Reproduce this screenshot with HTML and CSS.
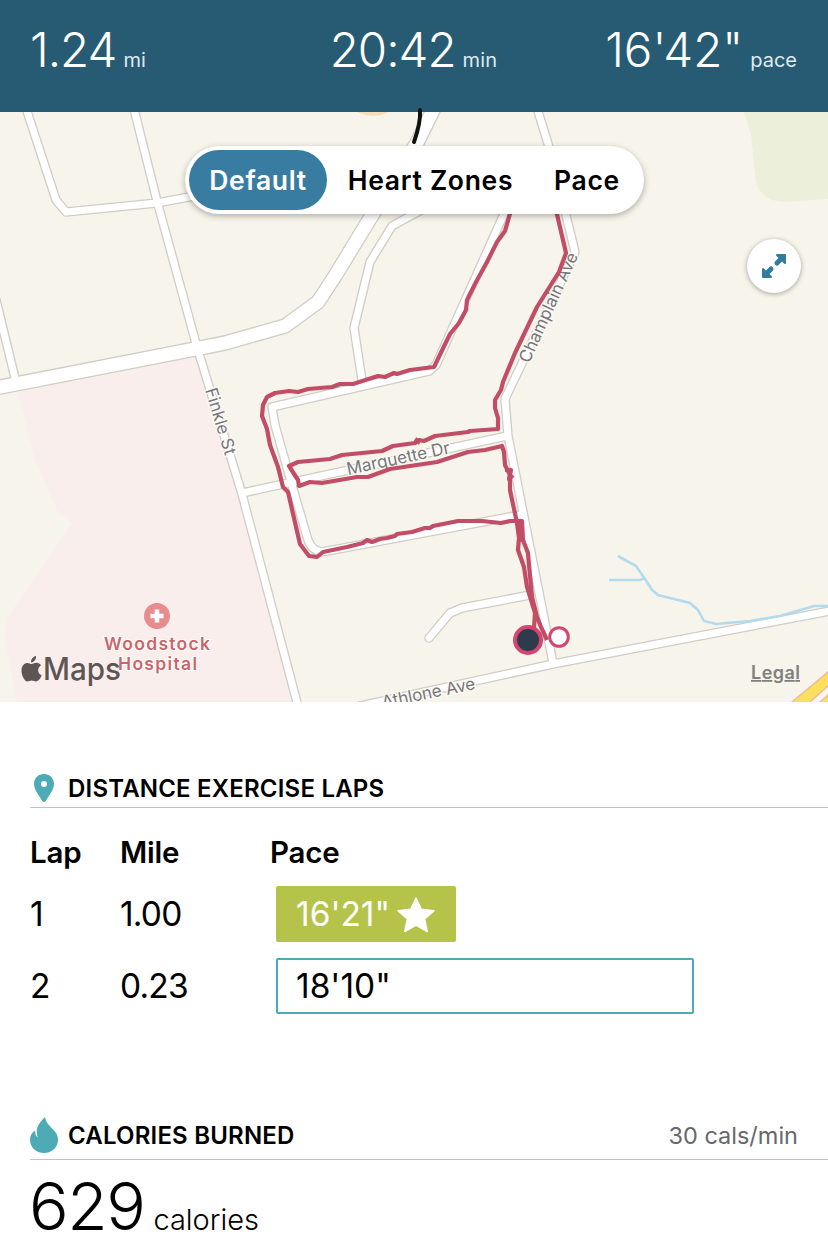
FILE: index.html
```html
<!DOCTYPE html>
<html lang="en">
<head>
    <meta charset="UTF-8">
    <meta name="viewport" content="width=device-width, initial-scale=1.0">
    <title>Workout Summary</title>
    <link rel="stylesheet" href="styles.css">
</head>
<body>
    <header class="summary">
        <div class="stat"><span class="value">1.24</span> <span class="unit">mi</span></div>
        <div class="stat"><span class="value">20:42</span> <span class="unit">min</span></div>
        <div class="stat stat-pace"><span class="value value-pace">16'42"</span> <span class="unit">pace</span></div>
    </header>

    <div class="map">
        <svg class="map-canvas" width="828" height="590" viewBox="0 112 828 590">
            <defs>
                <g id="small-roads">
                    <path d="M25 105L56 200L66 212L157 203L215 192"/>
                    <path d="M133 105L157 201L197 347L242 494L299 710"/>
                    <path d="M-4 300L16 382"/>
                    <path d="M425 208L392 226L370 262L354 328L362 380"/>
                    <path d="M536 105L550 150L575 252L505 399L508 436L553 663"/>
                    <path d="M508 205L436 365L429 371L272 407L275 425L291 482L308 540Q312 551 322 552L520 515"/>
                    <path d="M242 493L507 436"/>
                    <path d="M429 638L450 613L462 608L530 595"/>
                    <path d="M360 706L553 664L835 610"/>
                </g>
                <path id="main-road" d="M-5 388L200 348L225 343L285 326L318 302L335 276L374 212L417 143L438 100"/>
            </defs>

            <!-- land areas -->
            <rect y="112" width="828" height="590" fill="#f7f4eb"/>
            <path d="M18 392L198 350L242 494L299 702L17 702L12 675L5 640L7 618L25 592L72 523L58 512L35 460L27 430Z" fill="#f9eeeb"/>
            <path d="M744 112L751 135L756 182Q760 201 785 202L828 199V112Z" fill="#ecefda"/>
            <ellipse cx="373" cy="107" rx="18" ry="9" fill="#f8ddb6"/>

            <!-- roads -->
            <use href="#small-roads" class="road-edge"/>
            <use href="#main-road" class="road-edge main"/>
            <use href="#small-roads" class="road-fill"/>
            <use href="#main-road" class="road-fill main"/>
            <path d="M791 702L828 671V702Z" fill="#f0b99a"/>
            <path d="M793 702L828 673V685L809 702Z" fill="#fbe05d"/>
            <path d="M811 702L828 687V694L819 702Z" fill="#fbf6ee"/>
            <path d="M821 702L828 696V702Z" fill="#fbe05d"/>
            <path class="creek" d="M618 556L636 566L645 579L652 590L658 595L690 603L698 610L704 621L716 624L750 621L780 616L814 606L828 606M609 580H640L645 578"/>

            <!-- street names -->
            <text class="street" transform="translate(205 390) rotate(73)" textLength="69">Finkle St</text>
            <text class="street" transform="translate(529 364) rotate(-65.5)" textLength="119">Champlain Ave</text>
            <text class="street" transform="translate(348 475) rotate(-12)" textLength="105">Marquette Dr</text>
            <text class="street" transform="translate(383 708) rotate(-11.5)" textLength="95">Athlone Ave</text>

            <!-- recorded route -->
            <path class="route" d="M511 210L505 231L497 242L487 262L476 282L467 300L466 310L459 323L450 334L434 367L410 370L397 374L394 373L385 377L378 376L353 384L340 384L332 387L308 389L298 392L289 391L275 393L267 397L263 405L262 416L267 429L270 445L278 467L283 487L288 492L300 544L309 556L317 557L323 552L347 547L363 543L367 540L372 542L380 539L387 538L395 536L397 534L412 532L425 528L430 528L433 526L458 521L482 521L501 523L510 521L522 521L523 540L528 553L529 565L532 597L537 617L541 627L547 640"/>
            <path class="route" d="M556 210L566 253L559 272L537 307L515 353L503 382L501 390L495 400V408L498 418V429L470 431L468 432L435 436L424 441L419 440L415 443L393 446L382 451L342 455L330 459L298 462L289 466L298 480L299 486L310 482L322 483L357 477L368 477L390 469L437 462L468 452L485 450L502 446L504 452L505 465L510 475V490L517 523L519 538L518 550L524 567L527 587L535 613L534 628"/>
            <path class="route" d="M505 470L511 470L509 479L513 475M519 521L521 542M415 439L420 443"/>
            <circle cx="559" cy="637" r="9.3" fill="#fff" stroke="#d4466f" stroke-width="3"/>
            <circle cx="528" cy="640" r="13" fill="#2d3b4c" stroke="#d4466f" stroke-width="4"/>

            <!-- hospital -->
            <circle cx="157" cy="616" r="13" fill="#e78d90"/>
            <path d="M157 609.500V622.500M150.500 616H163.500" stroke="#fff" stroke-width="4.500"/>
            <text class="place" x="104" y="650" textLength="106">Woodstock</text>
            <text class="place" x="118" y="670" textLength="79">Hospital</text>

            <!-- attribution -->
            <g fill="#5e5654">
                <path d="M36 656C36.500 659.500 33.500 662.500 31 662.500C30.600 659.500 33.200 656.500 36 656Z"/>
                <path d="M31.500 664C33 664 34.500 662.800 36.500 662.800C38.500 662.800 40 663.700 41 665.200C36.800 668 37.500 673.500 41.700 675.300C40.500 678.600 38.300 681.400 36 681.400C34.400 681.400 33.600 680.500 31.700 680.500C29.700 680.500 28.800 681.400 27.300 681.400C24.500 681.400 21.500 675.500 21.500 670.500C21.500 665.500 24.500 662.900 27.500 662.900C29.200 662.900 30.400 664 31.500 664Z"/>
                <text class="brand" x="43" y="680" textLength="78" lengthAdjust="spacingAndGlyphs">Maps</text>
            </g>
            <text class="legal" x="751" y="679" textLength="49">Legal</text>
        </svg>

        <div class="tabs">
            <button class="tab active">Default</button>
            <button class="tab tab-zones">Heart Zones</button>
            <button class="tab tab-pace">Pace</button>
        </div>

        <button class="expand" aria-label="Expand map">
            <svg width="26" height="26" viewBox="0 0 26 26">
                <path d="M16 10L20 6M10 16L6 20" stroke="#337ba1" stroke-width="5" stroke-linecap="round"/>
                <path d="M15.500 1H24Q25 1 25 2V10.500L23.500 11L15 2.500ZM10.500 25H2Q1 25 1 24V15.500L2.500 15L11 23.500Z" fill="#337ba1"/>
            </svg>
        </button>

        <svg class="pen-mark" width="16" height="40" viewBox="0 0 16 40">
            <path d="M10 3Q11 15 4 35" fill="none" stroke="#111" stroke-width="4" stroke-linecap="round"/>
        </svg>
    </div>

    <section class="laps">
        <h2 class="section-title">
            <svg class="icon" width="28" height="30" viewBox="0 0 28 30">
                <path fill="#4dabb5" fill-rule="evenodd" d="M14 0C8.300 0 4 4.200 4 9.800C4 16.300 10.200 23.200 12.300 27Q14 29 15.700 27C17.800 23.200 24 16.300 24 9.800C24 4.200 19.700 0 14 0ZM14 7A3 3 0 1 1 14 13A3 3 0 1 1 14 7Z"/>
            </svg>
            <span>DISTANCE EXERCISE LAPS</span>
        </h2>
        <div class="lap-row lap-head">
            <span>Lap</span><span>Mile</span><span>Pace</span>
        </div>
        <div class="lap-row">
            <span>1</span><span>1.00</span>
            <div class="bar best">16'21"
                <svg width="40" height="38" viewBox="0 0 40 38">
                    <path d="M20 3L25.300 14.200L38 15.700L28.600 24L31.200 36.500L20 30.200L8.800 36.500L11.400 24L2 15.700L14.700 14.200Z" fill="#fff" stroke="#fff" stroke-width="1.500" stroke-linejoin="round"/>
                </svg>
            </div>
        </div>
        <div class="lap-row">
            <span>2</span><span>0.23</span>
            <div class="bar slow">18'10"</div>
        </div>
    </section>

    <section class="calories">
        <h2 class="section-title">
            <svg class="icon" width="28" height="38" viewBox="0 0 28 38">
                <path fill="#4dabb5" d="M15 0C10 5 6.500 9.500 6.800 15C6.900 17.500 7.300 19 8 20.500C5.800 19 5 17 5 13.500C2 15.500 0 18.500 0 22.500C0 30.500 6 36 14 36C22 36 28 30.500 28 22.500C28 12.500 16.500 10.500 15 0Z"/>
            </svg>
            <span>CALORIES BURNED</span>
            <span class="rate">30 cals/min</span>
        </h2>
        <div class="total"><span class="total-value">629</span> <span class="total-unit">calories</span></div>
    </section>
</body>
</html>
```

FILE: styles.css
```css
* {
    box-sizing: border-box;
}
body {
    margin: 0;
    background-color: #fff;
    color: #000;
    font-family: Inter, "Liberation Sans", sans-serif;
}
button {
    border: 0;
    padding: 0;
    background: none;
    font-family: inherit;
}
.summary {
    display: grid;
    grid-template-columns: 1fr auto 1fr;
    align-items: start;
    height: 112px;
    padding: 20px 31px 0 30px;
    background-color: #275b74;
    color: #fff;
}
.stat {
    display: flex;
    align-items: baseline;
    gap: 7px;
    line-height: 60px;
    white-space: nowrap;
}
.stat-pace {
    justify-content: flex-end;
}
.value {
    font-size: 47.5px;
    font-weight: 350;
    letter-spacing: -1px;
}
.value-pace {
    letter-spacing: 0;
}
.unit {
    font-size: 20px;
    color: #dfeaf0;
    letter-spacing: 0.2px;
}
.stat-pace .unit {
    letter-spacing: 0;
}
.map {
    position: relative;
    height: 590px;
}
.map-canvas {
    display: block;
}
.road-edge, .road-fill {
    fill: none;
    stroke: #cfcdc5;
    stroke-width: 9.6px;
    stroke-linecap: round;
    stroke-linejoin: round;
}
.road-edge.main {
    stroke-width: 15.6px;
}
.road-fill {
    stroke: #fff;
    stroke-width: 7px;
}
.road-fill.main {
    stroke-width: 13px;
}
.creek {
    fill: none;
    stroke: #b3dbef;
    stroke-width: 2.6px;
}
.route {
    fill: none;
    stroke: #c24d67;
    stroke-width: 4.2px;
    stroke-linejoin: round;
}
.street {
    font-size: 17px;
    fill: #77777a;
    stroke: #fbf9f4;
    stroke-width: 3px;
    paint-order: stroke;
}
.place {
    font-size: 17.5px;
    font-weight: 600;
    fill: #c8676b;
    stroke: #fff;
    stroke-width: 2px;
    paint-order: stroke;
}
.brand {
    font-size: 31px;
    font-weight: 500;
}
.legal {
    font-size: 18px;
    font-weight: 600;
    fill: #80807c;
    text-decoration: underline;
}
.tabs {
    position: absolute;
    top: 34px;
    left: 185px;
    display: flex;
    width: 459px;
    height: 68px;
    padding: 4px;
    border-radius: 34px;
    background-color: #fff;
    box-shadow: 0 2px 6px rgba(0, 0, 0, 0.3);
}
.tab {
    font-size: 26.5px;
    font-weight: 600;
    letter-spacing: 0.7px;
    color: #000;
    white-space: nowrap;
}
.tab.active {
    width: 138px;
    border-radius: 30px;
    background-color: #397ca2;
    color: #fff;
}
.tab-zones {
    width: 207px;
}
.tab-pace {
    width: 106px;
}
.expand {
    position: absolute;
    top: 127px;
    left: 747px;
    display: flex;
    align-items: center;
    justify-content: center;
    width: 54px;
    height: 54px;
    border-radius: 50%;
    background-color: #fff;
    box-shadow: 0 1px 5px rgba(0, 0, 0, 0.35);
}
.pen-mark {
    position: absolute;
    top: -5px;
    left: 410px;
}
.section-title {
    display: flex;
    align-items: center;
    margin: 0 0 0 30px;
    border-bottom: 1px solid #c3c3c3;
    font-size: 24px;
    font-weight: 600;
    letter-spacing: 0.2px;
}
.icon {
    margin-right: 10px;
}
.laps {
    padding-top: 68px;
}
.laps .section-title {
    height: 38px;
}
.lap-row {
    display: grid;
    grid-template-columns: 90px 156px 1fr;
    align-items: center;
    height: 56px;
    margin: 0 30px 16px;
    font-size: 33.5px;
    letter-spacing: -0.8px;
}
.lap-head {
    grid-template-columns: 90px 150px 1fr;
    height: 46px;
    margin: 21px 30px 11px;
    font-size: 29.5px;
    font-weight: 600;
    letter-spacing: -0.2px;
}
.bar {
    display: flex;
    align-items: center;
    gap: 8px;
    height: 56px;
    padding-left: 20px;
    border-radius: 2px;
    white-space: nowrap;
    letter-spacing: 0;
}
.best {
    gap: 6px;
    width: 180px;
    background-color: #b5c34b;
    color: #fff;
}
.slow {
    width: 418px;
    padding-left: 18px;
    border: 2px solid #4dabb5;
}
.calories {
    padding-top: 83px;
}
.calories .section-title {
    height: 47px;
    padding-bottom: 1px;
}
.rate {
    margin: 0 30px 0 auto;
    font-size: 23.5px;
    font-weight: 400;
    letter-spacing: 0;
    color: #68686a;
}
.total {
    display: flex;
    align-items: baseline;
    gap: 9px;
    margin-left: 29px;
    line-height: 92px;
}
.total-value {
    font-size: 66px;
    font-weight: 300;
    letter-spacing: -1.5px;
}
.total-unit {
    font-size: 29px;
    font-weight: 300;
}
```
